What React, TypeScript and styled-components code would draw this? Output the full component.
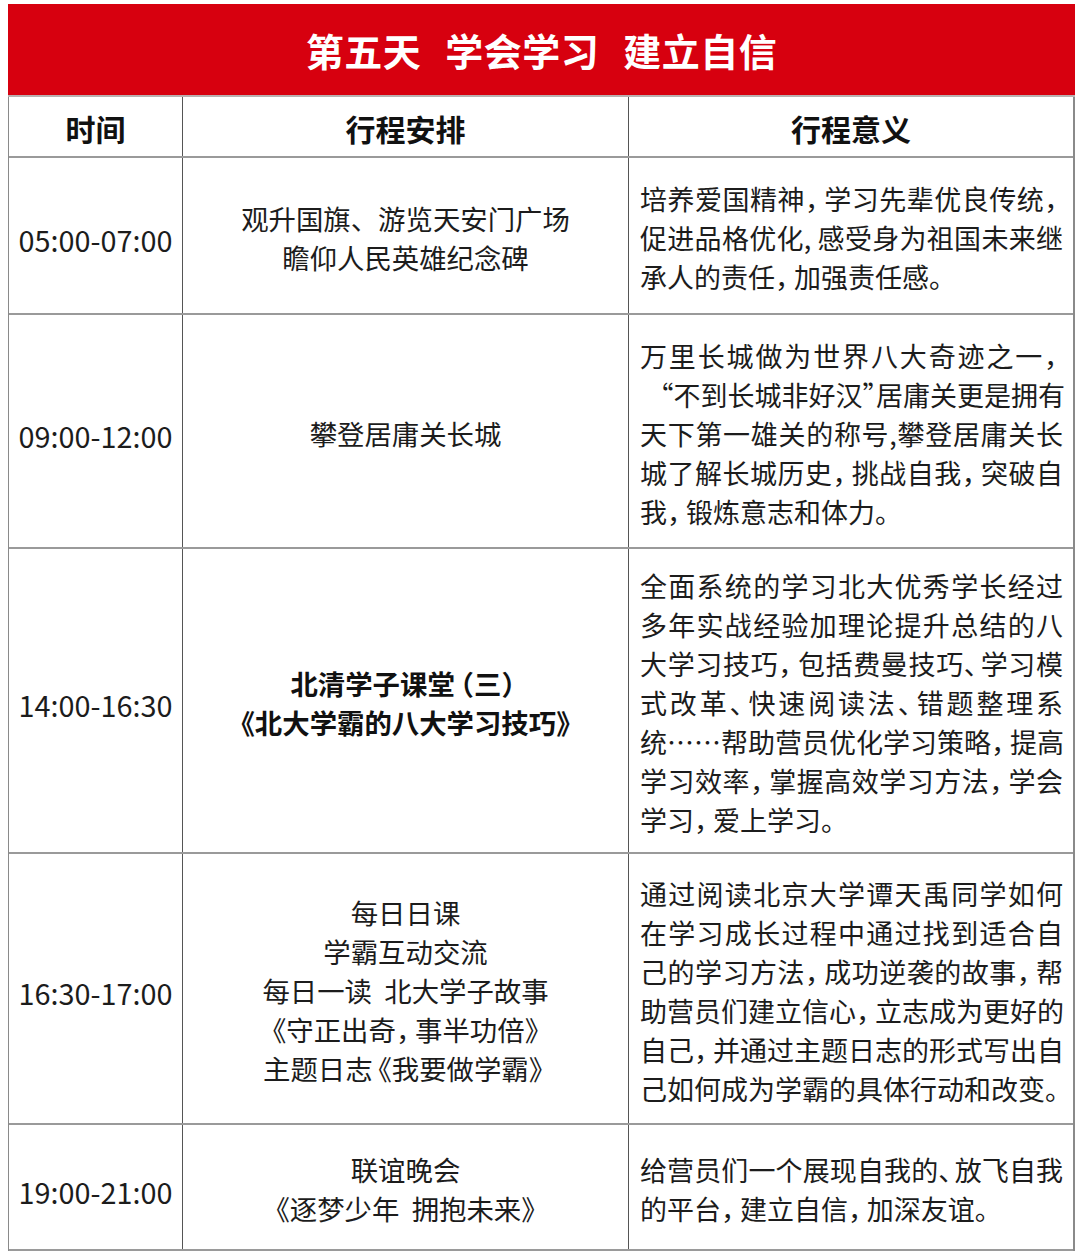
import { Fragment } from "react";
import styled, { createGlobalStyle } from "styled-components";

const GlobalStyle = createGlobalStyle`
  html, body {
    margin: 0;
    padding: 0;
    background: #ffffff;
  }
  body {
    font-family: "Noto Sans CJK SC", "Noto Sans", sans-serif;
    color: #1c1c1c;
  }
`;

const Page = styled.div`
  width: 1080px;
  padding: 4px 0 0 8px;
  box-sizing: border-box;
`;

const Table = styled.div`
  width: 1067px;
  display: flex;
  flex-direction: column;
  border-left: 1px solid #8a8a8a;
  border-right: 2px solid #8a8a8a;
  box-sizing: border-box;
`;

const TitleBar = styled.div`
  height: 93px;
  margin: 0 -2px 0 -1px;
  background: #d7000f;
  border-bottom: 2px solid #b9b0b0;
  box-sizing: border-box;
  display: flex;
  align-items: center;
  justify-content: center;
  gap: 24px;
  color: #ffffff;
  font-size: 38px;
  font-weight: 700;
  letter-spacing: 0.5px;
`;

const Row = styled.div<{ $height: number }>`
  display: grid;
  grid-template-columns: 174px 446px 1fr;
  height: ${({ $height }) => $height}px;
  border-bottom: 2px solid #9a9a9a;
  box-sizing: border-box;
`;

const Cell = styled.div<{ $align?: "left" | "center"; $last?: boolean }>`
  display: flex;
  flex-direction: column;
  justify-content: center;
  align-items: ${({ $align }) => ($align === "left" ? "flex-start" : "center")};
  text-align: ${({ $align }) => $align ?? "center"};
  padding: ${({ $align }) => ($align === "left" ? "4px 0 0 11px" : "4px 0 0")};
  border-right: ${({ $last }) => ($last ? "none" : "1px solid #555555")};
  box-sizing: border-box;
  font-size: 27.4px;
  line-height: 39px;
  white-space: nowrap;
`;

const HeadCell = styled(Cell)`
  font-size: 30px;
  font-weight: 700;
  color: #111111;
`;

const Time = styled.span`
  font-size: 28.8px;
  padding-top: 4px;
`;

const Line = styled.span<{ $bold?: boolean }>`
  display: block;
  white-space: pre;
  font-weight: ${({ $bold }) => ($bold ? 700 : 400)};
  color: ${({ $bold }) => ($bold ? "#111111" : "#1c1c1c")};
`;

const Meaning = styled.span<{ $fill: boolean; $indent?: boolean }>`
  display: block;
  width: 423px;
  box-sizing: border-box;
  white-space: pre;
  padding-left: ${({ $indent }) => ($indent ? "20px" : "0")};
  font-size: 27px;
  text-align: ${({ $fill }) => ($fill ? "justify" : "left")};
  text-align-last: ${({ $fill }) => ($fill ? "justify" : "left")};
`;

// full-width punctuation set in half width plus a little room, as in the original
const Punct = styled.span<{ $open: boolean; $pad: number }>`
  font-feature-settings: "halt";
  padding-left: ${({ $open, $pad }) => ($open ? `${$pad}em` : "0")};
  padding-right: ${({ $open, $pad }) => ($open ? "0" : `${$pad}em`)};
`;

const PADS: Record<string, [boolean, number]> = {
  "《": [true, 0.2],
  "（": [true, 0.2],
  "“": [true, 0],
  "，": [false, 0.2],
  "》": [false, 0.2],
  "）": [false, 0.2],
  "”": [false, 0],
};

function Text({ value, tightComma }: { value: string; tightComma?: boolean }) {
  const parts: { text: string; pad?: [boolean, number] }[] = [];
  let buf = "";
  for (const ch of value) {
    const pad: [boolean, number] | undefined =
      ch === "、" ? (tightComma ? [false, 0.1] : undefined) : PADS[ch];
    if (pad) {
      if (buf) parts.push({ text: buf });
      buf = "";
      parts.push({ text: ch, pad });
    } else {
      buf += ch;
    }
  }
  if (buf) parts.push({ text: buf });
  return (
    <>
      {parts.map((p, i) =>
        p.pad ? (
          <Punct key={i} $open={p.pad[0]} $pad={p.pad[1]}>
            {p.text}
          </Punct>
        ) : (
          <Fragment key={i}>{p.text}</Fragment>
        )
      )}
    </>
  );
}

type Item = {
  time: string;
  height: number;
  plan: string[];
  bold?: boolean;
  meaning: string[];
  indentLine?: number;
};

const items: Item[] = [
  {
    time: "05:00-07:00",
    height: 157,
    plan: ["观升国旗、游览天安门广场", "瞻仰人民英雄纪念碑"],
    meaning: [
      "培养爱国精神，学习先辈优良传统，",
      "促进品格优化, 感受身为祖国未来继",
      "承人的责任，加强责任感。",
    ],
  },
  {
    time: "09:00-12:00",
    height: 234,
    plan: ["攀登居庸关长城"],
    indentLine: 1,
    meaning: [
      "万里长城做为世界八大奇迹之一，",
      "“不到长城非好汉”居庸关更是拥有",
      "天下第一雄关的称号,攀登居庸关长",
      "城了解长城历史，挑战自我，突破自",
      "我，锻炼意志和体力。",
    ],
  },
  {
    time: "14:00-16:30",
    height: 305,
    bold: true,
    plan: ["北清学子课堂（三）", "《北大学霸的八大学习技巧》"],
    meaning: [
      "全面系统的学习北大优秀学长经过",
      "多年实战经验加理论提升总结的八",
      "大学习技巧，包括费曼技巧、学习模",
      "式改革、快速阅读法、错题整理系",
      "统……帮助营员优化学习策略，提高",
      "学习效率，掌握高效学习方法，学会",
      "学习，爱上学习。",
    ],
  },
  {
    time: "16:30-17:00",
    height: 271,
    plan: [
      "每日日课",
      "学霸互动交流",
      "每日一读  北大学子故事",
      "《守正出奇，事半功倍》",
      "主题日志《我要做学霸》",
    ],
    meaning: [
      "通过阅读北京大学谭天禹同学如何",
      "在学习成长过程中通过找到适合自",
      "己的学习方法，成功逆袭的故事，帮",
      "助营员们建立信心，立志成为更好的",
      "自己，并通过主题日志的形式写出自",
      "己如何成为学霸的具体行动和改变。",
    ],
  },
  {
    time: "19:00-21:00",
    height: 126,
    plan: ["联谊晚会", "《逐梦少年  拥抱未来》"],
    meaning: ["给营员们一个展现自我的、放飞自我", "的平台，建立自信，加深友谊。"],
  },
];

export default function App() {
  return (
    <>
      <GlobalStyle />
      <Page lang="zh-CN">
        <Table>
          <TitleBar>
            <span>第五天</span>
            <span>学会学习</span>
            <span>建立自信</span>
          </TitleBar>
          <Row $height={61}>
            <HeadCell>时间</HeadCell>
            <HeadCell>行程安排</HeadCell>
            <HeadCell $last>行程意义</HeadCell>
          </Row>
          {items.map((item) => (
            <Row key={item.time} $height={item.height}>
              <Cell>
                <Time>{item.time}</Time>
              </Cell>
              <Cell>
                {item.plan.map((line) => (
                  <Line key={line} $bold={item.bold}>
                    <Text value={line} />
                  </Line>
                ))}
              </Cell>
              <Cell $align="left" $last>
                {item.meaning.map((line, i) => (
                  <Meaning
                    key={line}
                    $fill={i < item.meaning.length - 1}
                    $indent={item.indentLine === i}
                  >
                    <Text value={line} tightComma />
                  </Meaning>
                ))}
              </Cell>
            </Row>
          ))}
        </Table>
      </Page>
    </>
  );
}
